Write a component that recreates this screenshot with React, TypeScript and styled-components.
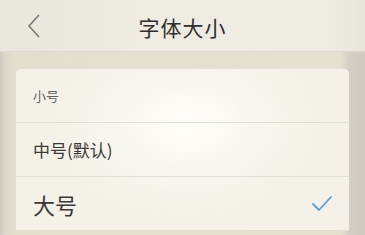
import styled, { createGlobalStyle } from "styled-components";

const GlobalStyle = createGlobalStyle`
  html, body {
    margin: 0;
    padding: 0;
    background: #e2dccd;
  }
  body {
    font-family: "Noto Sans CJK SC", "Noto Sans", sans-serif;
  }
`;

const Screen = styled.div`
  width: 365px;
  height: 235px;
  overflow: hidden;
  display: flex;
  flex-direction: column;
  background: linear-gradient(90deg, #cdc9be 0, #dcd7ca 5px, #e4dece 16px, #e6e0d0 340px, #d2cec3 350px, #cfcbc0 365px);
`;

const Header = styled.header`
  height: 52px;
  flex-shrink: 0;
  display: grid;
  grid-template-columns: 60px 1fr 60px;
  align-items: center;
  background: linear-gradient(90deg, #e9e6dd 0, #eeebe2 40%, #eeebe2 90%, #e8e5dc 100%);
  border-bottom: 1px solid #dcd6c8;
  box-sizing: border-box;
`;

const Back = styled.button`
  border: 0;
  background: none;
  padding: 0 0 0 26px;
  height: 52px;
  display: flex;
  align-items: center;
`;

const Title = styled.h1`
  margin: 0;
  text-align: center;
  font-size: 21px;
  font-weight: 400;
  color: #2e2e2c;
  letter-spacing: 1px;
  padding-top: 1px;
`;

const Body = styled.main`
  flex: 1;
  padding: 17px 16px 0 16px;
`;

const Card = styled.ul`
  list-style: none;
  margin: 0;
  padding: 0;
  width: 333px;
  border-radius: 5px 5px 0 0;
  background: radial-gradient(ellipse 130px 90px at 170px 55px, #fffefb 0%, #faf7f0 45%, #f4f1e9 100%);
`;

const Row = styled.li<{ $size: number; $muted?: boolean }>`
  height: 54px;
  display: flex;
  align-items: center;
  justify-content: space-between;
  padding: 0 16px 0 17px;
  border-bottom: 1px solid #e2ded5;
  box-sizing: border-box;
  font-size: ${(p) => p.$size}px;
  color: ${(p) => (p.$muted ? "#64635e" : "#3a3935")};
`;

const Check = styled.svg`
  width: 22px;
  height: 18px;
`;

const rows = [
  { label: "小号", size: 13, muted: true },
  { label: "中号(默认)", size: 17 },
  { label: "大号", size: 22, checked: true },
];

export default function App() {
  return (
    <>
      <GlobalStyle />
      <Screen>
        <Header>
          <Back aria-label="back">
            <svg width="16" height="26" viewBox="0 0 16 26">
              <polyline points="13,2 3,13 13,24" fill="none" stroke="#7a7973" strokeWidth="1.6" />
            </svg>
          </Back>
          <Title>字体大小</Title>
          <span />
        </Header>
        <Body>
          <Card>
            {rows.map((r) => (
              <Row key={r.label} $size={r.size} $muted={r.muted}>
                <span>{r.label}</span>
                {r.checked && (
                  <Check viewBox="0 0 22 18">
                    <polyline points="2,9 8,15 20,2" fill="none" stroke="#5b9fd6" strokeWidth="1.8" strokeLinecap="round" strokeLinejoin="round" />
                  </Check>
                )}
              </Row>
            ))}
          </Card>
        </Body>
      </Screen>
    </>
  );
}
